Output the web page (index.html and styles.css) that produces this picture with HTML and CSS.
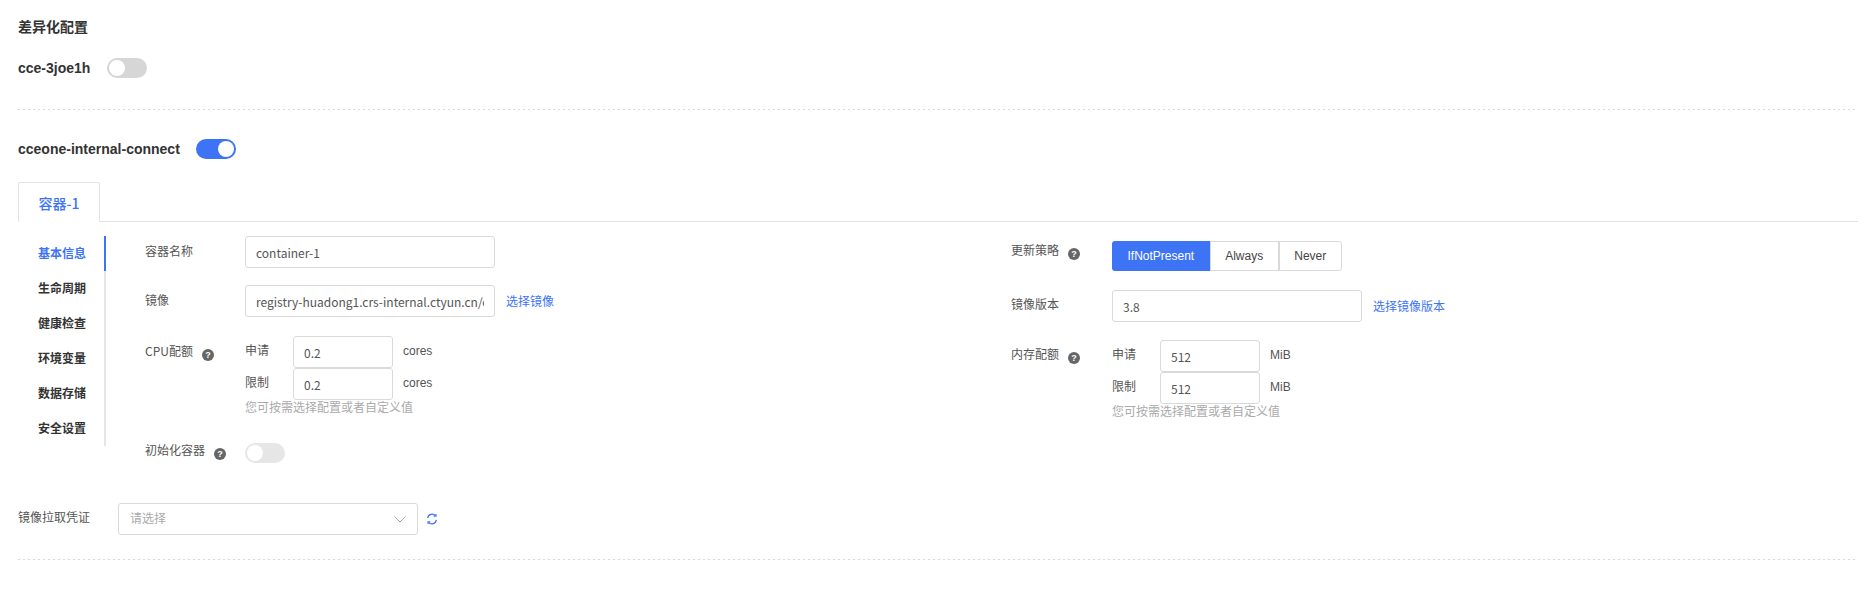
FILE: index.html
```html
<!DOCTYPE html>
<html lang="zh-CN">
  <head>
    <meta charset="UTF-8" />
    <title>差异化配置</title>
    <link rel="stylesheet" href="styles.css">
  </head>
  <body>
    <h2 class="title">差异化配置</h2>

    <div class="switch-row first">
      <span class="name">cce-3joe1h</span>
      <span class="switch"></span>
    </div>
    <hr class="dash" />

    <div class="switch-row">
      <span class="name">cceone-internal-connect</span>
      <span class="switch on"></span>
    </div>

    <div class="tabs">
      <div class="tab">容器-1</div>
    </div>

    <div class="panel">
      <ul class="nav">
        <li class="active">基本信息</li>
        <li>生命周期</li>
        <li>健康检查</li>
        <li>环境变量</li>
        <li>数据存储</li>
        <li>安全设置</li>
      </ul>

      <div class="col">
        <div class="field">
          <label>容器名称</label>
          <input class="input" type="text" value="container-1" />
        </div>
        <div class="field">
          <label>镜像</label>
          <input class="input" type="text" value="registry-huadong1.crs-internal.ctyun.cn/cceone/container" />
          <a class="link">选择镜像</a>
        </div>
        <div class="field quota">
          <label>CPU配额<i class="help">?</i></label>
          <div>
            <div class="quota-row">
              <span class="sub">申请</span>
              <input class="input small" type="text" value="0.2" />
              <span class="unit">cores</span>
            </div>
            <div class="quota-row">
              <span class="sub">限制</span>
              <input class="input small" type="text" value="0.2" />
              <span class="unit">cores</span>
            </div>
            <p class="hint">您可按需选择配置或者自定义值</p>
          </div>
        </div>
        <div class="field init">
          <label>初始化容器<i class="help">?</i></label>
          <span class="switch off-light"></span>
        </div>
      </div>

      <div class="col right">
        <div class="field policy">
          <label>更新策略<i class="help">?</i></label>
          <div class="btn-group">
            <button class="active">IfNotPresent</button>
            <button>Always</button>
            <button>Never</button>
          </div>
        </div>
        <div class="field version">
          <label>镜像版本</label>
          <input class="input" type="text" value="3.8" />
          <a class="link">选择镜像版本</a>
        </div>
        <div class="field quota memory">
          <label>内存配额<i class="help">?</i></label>
          <div>
            <div class="quota-row">
              <span class="sub">申请</span>
              <input class="input small" type="text" value="512" />
              <span class="unit">MiB</span>
            </div>
            <div class="quota-row">
              <span class="sub">限制</span>
              <input class="input small" type="text" value="512" />
              <span class="unit">MiB</span>
            </div>
            <p class="hint">您可按需选择配置或者自定义值</p>
          </div>
        </div>
      </div>
    </div>

    <div class="pull">
      <label>镜像拉取凭证</label>
      <div class="select">
        <span>请选择</span>
        <svg width="14" height="14" viewBox="0 0 14 14" fill="none" stroke="#aaa" stroke-width="1">
          <path d="M1.5 4.5 7 10l5.5-5.5" />
        </svg>
      </div>
      <svg class="refresh" width="12" height="12" viewBox="0 0 14 14" fill="none" stroke="#3d74f6" stroke-width="1.4">
        <path d="M2 6a5 5 0 0 1 9-2.6" />
        <path d="M12 8a5 5 0 0 1-9 2.6" />
        <path d="M11.6 1.2v2.6H9" />
        <path d="M2.4 12.8v-2.6H5" />
      </svg>
    </div>
    <hr class="dash bottom" />
  </body>
</html>
```

FILE: styles.css
```css
* {
  margin: 0;
  padding: 0;
  box-sizing: border-box;
  font-family: "Noto Sans CJK SC", "Noto Sans", sans-serif;
}

body {
  padding: 16px 8px 0 18px;
  font-size: 12px;
  color: #555;
  background: #fff;
}

.title {
  font-size: 14px;
  font-weight: 700;
  line-height: 20px;
  color: #333;
}

.switch-row {
  display: flex;
  align-items: center;
  height: 20px;
  margin-top: 29px;
}
.switch-row.first {
  margin-top: 22px;
}
.name {
  font-family: "Liberation Sans", "Noto Sans CJK SC", sans-serif;
  font-size: 14px;
  font-weight: 700;
  color: #333;
  margin-right: 16px;
}
.first .name {
  margin-right: 17px;
}

.switch {
  display: block;
  position: relative;
  width: 40px;
  height: 20px;
  border-radius: 10px;
  background: #d6d6d6;
}
.switch::after {
  content: "";
  position: absolute;
  left: 2px;
  top: 2px;
  width: 16px;
  height: 16px;
  border-radius: 50%;
  background: #fff;
}
.switch.on {
  background: #3d74f6;
}
.switch.on::after {
  left: 22px;
}
.switch.off-light {
  background: #e6e6e6;
}

.dash {
  height: 1px;
  border: 0;
  margin-top: 31px;
  background: repeating-linear-gradient(to right, #d9d9d9 0 2px, transparent 2px 5px);
}
.dash.bottom {
  margin-top: 24px;
}

.tabs {
  margin-top: 23px;
  border-bottom: 1px solid #e3e3e3;
  display: flex;
  height: 40px;
}
.tab {
  width: 82px;
  height: 40px;
  border: 1px solid #e3e3e3;
  border-bottom: 0;
  border-radius: 2px 2px 0 0;
  background: #fff;
  text-align: center;
  line-height: 40px;
  font-size: 14px;
  font-weight: 500;
  color: #3d74f6;
}

.panel {
  display: flex;
  margin-top: 14px;
}

.nav {
  list-style: none;
  width: 88px;
  flex: none;
  border-right: 2px solid #e6e6e6;
  align-self: flex-start;
  margin-right: 38px;
}
.nav li {
  height: 35px;
  line-height: 33px;
  padding-right: 18px;
  margin-right: -2px;
  border-right: 2px solid transparent;
  text-align: right;
  font-weight: 700;
  color: #333;
}
.nav li.active {
  color: #3d74f6;
  border-right-color: #3d74f6;
}

.col {
  width: 867px;
  flex: none;
}
.field {
  display: flex;
  margin-bottom: 17px;
}
.field label {
  width: 101px;
  flex: none;
  padding-left: 1px;
  line-height: 30px;
  color: #555;
}
.col.right .field label {
  padding-left: 0;
  line-height: 27px;
}
.help {
  display: inline-block;
  width: 12px;
  height: 12px;
  margin-left: 9px;
  border-radius: 50%;
  background: #666;
  color: #fff;
  font-family: "Liberation Sans", sans-serif;
  font-size: 9px;
  font-weight: 700;
  font-style: normal;
  line-height: 12px;
  text-align: center;
  vertical-align: -2px;
}

.input {
  width: 250px;
  height: 32px;
  padding: 0 10px;
  border: 1px solid #d9d9d9;
  border-radius: 3px;
  font-size: 12px;
  color: #555;
  outline: none;
}
.input.small {
  width: 100px;
  padding: 0 10px;
}

.link {
  margin-left: 11px;
  line-height: 32px;
  color: #3d74f6;
}

.quota {
  margin-top: 19px;
}
.quota-row {
  display: flex;
}
.sub {
  width: 48px;
  line-height: 28px;
}
.unit {
  margin-left: 10px;
  font-family: "Liberation Sans", sans-serif;
  line-height: 30px;
}
.hint {
  line-height: 14px;
  color: #aaa;
}

.init {
  margin-top: 29px;
  margin-bottom: 0;
}
.field.init label {
  line-height: 14px;
}

.policy {
  margin-top: 5px;
}
.col.right .field.policy label {
  line-height: 18px;
}
.btn-group {
  display: flex;
}
.btn-group button {
  height: 30px;
  padding: 0 14.5px;
  border: 1px solid #d9d9d9;
  background: #fff;
  font-family: "Liberation Sans", sans-serif;
  font-size: 12px;
  color: #444;
}
.btn-group button:last-child {
  border-radius: 0 3px 3px 0;
}
.btn-group button.active {
  border: 0;
  padding: 0 15.5px;
  border-radius: 3px 0 0 3px;
  background: #3d74f6;
  color: #fff;
}

.version {
  margin-top: 19px;
}
.memory {
  margin-top: 18px;
}

.pull {
  display: flex;
  align-items: center;
  margin-top: 40px;
}
.pull label {
  width: 100px;
  flex: none;
  margin-bottom: 5px;
}
.select {
  display: flex;
  align-items: center;
  justify-content: space-between;
  width: 300px;
  height: 32px;
  padding: 0 10px 0 11px;
  border: 1px solid #d9d9d9;
  border-radius: 3px;
  color: #aaa;
}
.select span {
  margin-bottom: 3px;
}
.refresh {
  margin-left: 8px;
}
```
